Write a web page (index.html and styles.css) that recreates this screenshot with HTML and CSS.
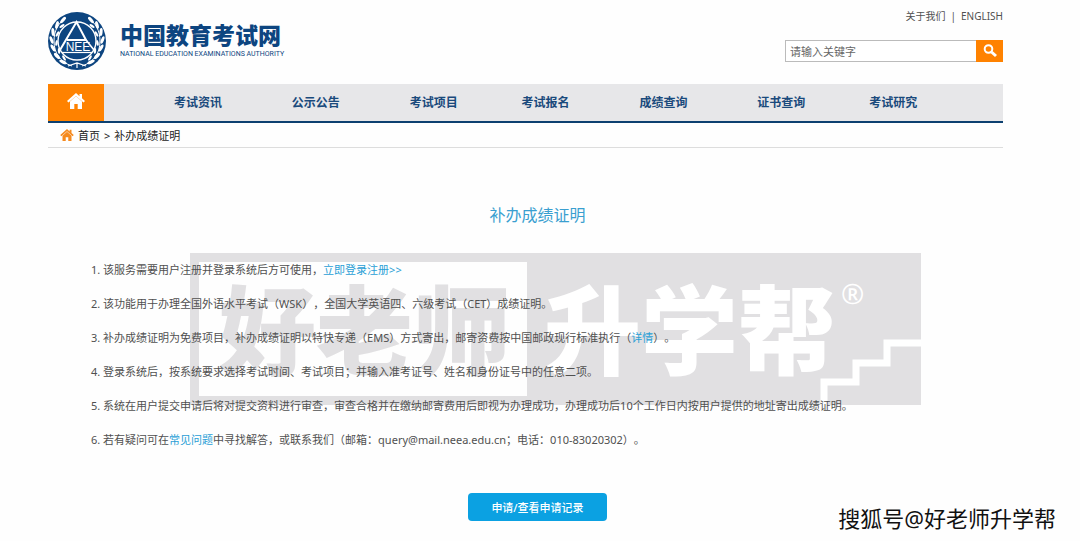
FILE: index.html
```html
<!DOCTYPE html>
<html lang="zh-CN">
<head>
    <meta charset="UTF-8">
    <meta name="viewport" content="width=device-width, initial-scale=1.0">
    <title>补办成绩证明 - 中国教育考试网</title>
    <link rel="stylesheet" href="styles.css">
</head>
<body>
    <header class="header">
        <a href="#" class="logo">
            <svg class="emblem" viewBox="0 0 58 58" aria-hidden="true">
                <defs>
                    <g id="branch" fill="#fff">
                        <path d="M24 54C12 50 6 41 6 29C6 19 10 11 18 6" fill="none" stroke="#fff" stroke-width="1"/>
                        <ellipse cx="15" cy="8" rx="4" ry="1.6" transform="rotate(-50 15 8)"/>
                        <ellipse cx="9" cy="13" rx="4" ry="1.6" transform="rotate(-75 9 13)"/>
                        <ellipse cx="5" cy="20" rx="4" ry="1.6" transform="rotate(-95 5 20)"/>
                        <ellipse cx="3.5" cy="28" rx="4" ry="1.5" transform="rotate(70 3.5 28)"/>
                        <ellipse cx="5" cy="36" rx="4" ry="1.6" transform="rotate(60 5 36)"/>
                        <ellipse cx="9" cy="44" rx="4" ry="1.6" transform="rotate(45 9 44)"/>
                        <ellipse cx="15" cy="50" rx="4" ry="1.6" transform="rotate(25 15 50)"/>
                        <ellipse cx="14" cy="14" rx="3" ry="1.2" transform="rotate(-35 14 14)"/>
                        <ellipse cx="9.5" cy="22" rx="3" ry="1.2" transform="rotate(-60 9.5 22)"/>
                        <ellipse cx="8.5" cy="31" rx="3" ry="1.2" transform="rotate(-80 8.5 31)"/>
                        <ellipse cx="11" cy="39" rx="3" ry="1.2" transform="rotate(85 11 39)"/>
                        <ellipse cx="16" cy="46" rx="3" ry="1.2" transform="rotate(60 16 46)"/>
                    </g>
                </defs>
                <circle cx="29" cy="29" r="29" fill="#0d4580"/>
                <use href="#branch"/>
                <use href="#branch" transform="translate(58 0) scale(-1 1)"/>
                <circle cx="29" cy="29" r="19" fill="#0d4580" stroke="#fff" stroke-width="1.4"/>
                <path d="M12 38L28.500 10L38 28H19" fill="none" stroke="#fff" stroke-width="2"/>
                <path d="M38 28L46 38" stroke="#fff" stroke-width="1.6"/>
                <text x="30" y="39" text-anchor="middle" class="emblem-text">NEE</text>
                <path d="M14 40.500H44" stroke="#fff" stroke-width="1.2"/>
                <path d="M20 54L29 51L38 54M29 51V56" fill="none" stroke="#fff" stroke-width="1.2"/>
            </svg>
            <span class="logo-name">
                <span class="logo-cn">中国教育考试网</span>
                <span class="logo-en">NATIONAL EDUCATION EXAMINATIONS AUTHORITY</span>
            </span>
        </a>
        <div class="tools">
            <div class="top-links">
                <a href="#">关于我们</a>
                <span>|</span>
                <a href="#">ENGLISH</a>
            </div>
            <form class="search">
                <input type="text" placeholder="请输入关键字" aria-label="请输入关键字">
                <button type="button" aria-label="搜索">
                    <svg viewBox="0 0 16 16" width="16" height="16">
                        <circle cx="6.5" cy="6" r="3.8" fill="none" stroke="#fff" stroke-width="2"/>
                        <path d="M9.500 9L14 13" stroke="#fff" stroke-width="3"/>
                    </svg>
                </button>
            </form>
        </div>
    </header>

    <nav class="nav">
        <a href="#" class="nav-home" aria-label="首页">
            <svg viewBox="0 0 18 16" width="18" height="16">
                <path d="M9 0L0 8L1.500 9.500L9 3L16.500 9.500L18 8L15 5.300V1H12.500V3.200Z" fill="#fff"/>
                <path d="M9 3L3 8.500V16H7.300V11H10.700V16H15V8.500Z" fill="#fff"/>
            </svg>
        </a>
        <ul>
            <li><a href="#">考试资讯</a></li>
            <li><a href="#">公示公告</a></li>
            <li><a href="#">考试项目</a></li>
            <li><a href="#">考试报名</a></li>
            <li><a href="#">成绩查询</a></li>
            <li><a href="#">证书查询</a></li>
            <li><a href="#">考试研究</a></li>
        </ul>
    </nav>

    <div class="breadcrumb">
        <svg viewBox="0 0 18 16" width="14" height="12">
            <path d="M9 0L0 8L1.500 9.500L9 3L16.500 9.500L18 8L15 5.300V1H12.500V3.200Z" fill="#f58a1f"/>
            <path d="M9 3.600L3 9V16H7.300V11H10.700V16H15V9Z" fill="#f58a1f"/>
        </svg>
        <a href="#">首页</a>
        <span>&gt;</span>
        <span>补办成绩证明</span>
    </div>

    <main class="content">
        <div class="watermark" aria-hidden="true">
            <div class="mark-box">好老师</div>
            <div class="mark-side">升学帮</div>
            <span class="mark-r">®</span>
            <svg class="mark-steps" viewBox="0 0 101 66" width="101" height="66">
                <path d="M4 66V43H36V24H67V4H101" fill="none" stroke="#fff" stroke-width="7"/>
            </svg>
        </div>
        <h1>补办成绩证明</h1>
        <ol class="notes">
            <li>1. 该服务需要用户注册并登录系统后方可使用，<a href="#">立即登录注册&gt;&gt;</a></li>
            <li>2. 该功能用于办理全国外语水平考试（WSK），全国大学英语四、六级考试（CET）成绩证明。</li>
            <li>3. 补办成绩证明为免费项目，补办成绩证明以特快专递（EMS）方式寄出，邮寄资费按中国邮政现行标准执行（<a href="#">详情</a>）。</li>
            <li>4. 登录系统后，按系统要求选择考试时间、考试项目；并输入准考证号、姓名和身份证号中的任意二项。</li>
            <li>5. 系统在用户提交申请后将对提交资料进行审查，审查合格并在缴纳邮寄费用后即视为办理成功，办理成功后10个工作日内按用户提供的地址寄出成绩证明。</li>
            <li>6. 若有疑问可在<a href="#">常见问题</a>中寻找解答，或联系我们（邮箱：query@mail.neea.edu.cn；电话：010-83020302）。</li>
        </ol>
        <button type="button" class="apply">申请/查看申请记录</button>
    </main>

    <div class="source">搜狐号@好老师升学帮</div>
</body>
</html>
```
FILE: styles.css
```css
* {
    box-sizing: border-box;
}
body {
    margin: 0;
    padding: 0 77px 0 48px;
    background: #fefefe;
    color: #505050;
    font-family: "Noto Sans", "Noto Sans CJK SC", sans-serif;
    font-size: 11px;
    text-spacing-trim: space-all;
}
a {
    color: inherit;
    text-decoration: none;
}
ul, ol {
    margin: 0;
    padding: 0;
    list-style: none;
}
.header {
    display: flex;
    justify-content: space-between;
    height: 84px;
}
.logo {
    display: flex;
    align-items: flex-start;
    gap: 14px;
    padding-top: 12px;
    color: #0d4580;
}
.emblem {
    width: 58px;
    height: 58px;
}
.emblem-text {
    fill: #fff;
    font: 12px "Liberation Sans", sans-serif;
}
.logo-name {
    display: flex;
    flex-direction: column;
    padding-top: 9px;
}
.logo-cn {
    font-size: 23px;
    font-weight: 900;
    line-height: 28px;
}
.logo-en {
    font-family: Roboto, Arial, sans-serif;
    font-size: 7px;
    line-height: 10px;
}
.tools {
    display: flex;
    flex-direction: column;
    align-items: flex-end;
    gap: 16px;
    padding-top: 8px;
}
.top-links {
    display: flex;
    gap: 5px;
    font-size: 10px;
    line-height: 16px;
}
.search {
    display: flex;
}
.search input {
    width: 191px;
    height: 22px;
    padding: 0 4px;
    border: 1px solid #bbb;
    border-right: 0;
    background: #fff;
    font-family: inherit;
    font-size: 11px;
}
.search input::placeholder {
    color: #666;
}
.search button {
    display: flex;
    align-items: center;
    justify-content: center;
    width: 27px;
    height: 22px;
    padding: 0;
    border: 0;
    background: #ff8200;
}
.nav {
    display: flex;
    height: 39px;
    border-bottom: 2px solid #0d4070;
    background: #e7e7e9;
}
.nav-home {
    display: flex;
    align-items: center;
    justify-content: center;
    width: 56px;
    padding-bottom: 4px;
    background: #ff8200;
}
.nav ul {
    display: grid;
    flex: 1;
    grid-template-columns: 118fr 118fr 112fr 118fr 118fr 112fr 134fr;
    padding-left: 70px;
    color: #1a4a7c;
    font-size: 12px;
    font-weight: bold;
    line-height: 38px;
}
.breadcrumb {
    display: flex;
    align-items: center;
    gap: 4px;
    height: 25px;
    padding-left: 12px;
    border-bottom: 1px solid #ddd;
    color: #222;
}
.content {
    position: relative;
    padding: 55px 0 0 24px;
}
.content h1 {
    position: relative;
    margin: 0 0 26px;
    color: #3a9fd0;
    font-size: 16px;
    font-weight: normal;
    line-height: 24px;
    text-align: center;
}
.notes {
    position: relative;
    padding-left: 19px;
    line-height: 34px;
}
.notes a {
    color: #2a9fd6;
}
.apply {
    position: relative;
    display: block;
    width: 139px;
    height: 28px;
    margin: 36px auto 20px;
    padding: 0;
    border: 0;
    border-radius: 4px;
    background: #0ba1e2;
    color: #fff;
    font-family: inherit;
    font-size: 11px;
    font-weight: 500;
}
/* brand stamp behind the notes */
.watermark {
    position: absolute;
    top: 105px;
    left: 142px;
    display: flex;
    width: 731px;
    height: 152px;
    padding: 9px;
    background: #e1e0e2;
    color: #fff;
    font-size: 97px;
    font-weight: 900;
    line-height: 134px;
    white-space: nowrap;
}
.mark-box {
    width: 328px;
    padding-left: 20px;
    background: #fefefe;
    color: #e1e0e2;
}
.mark-side {
    padding-left: 17px;
}
.mark-r {
    position: absolute;
    top: 24px;
    left: 651px;
    font-size: 28px;
    font-weight: normal;
    line-height: 32px;
}
.mark-steps {
    position: absolute;
    right: 0;
    bottom: 0;
}
.source {
    position: absolute;
    right: 24px;
    bottom: 8px;
    color: #111;
    font-size: 22px;
    line-height: 30px;
}
```
